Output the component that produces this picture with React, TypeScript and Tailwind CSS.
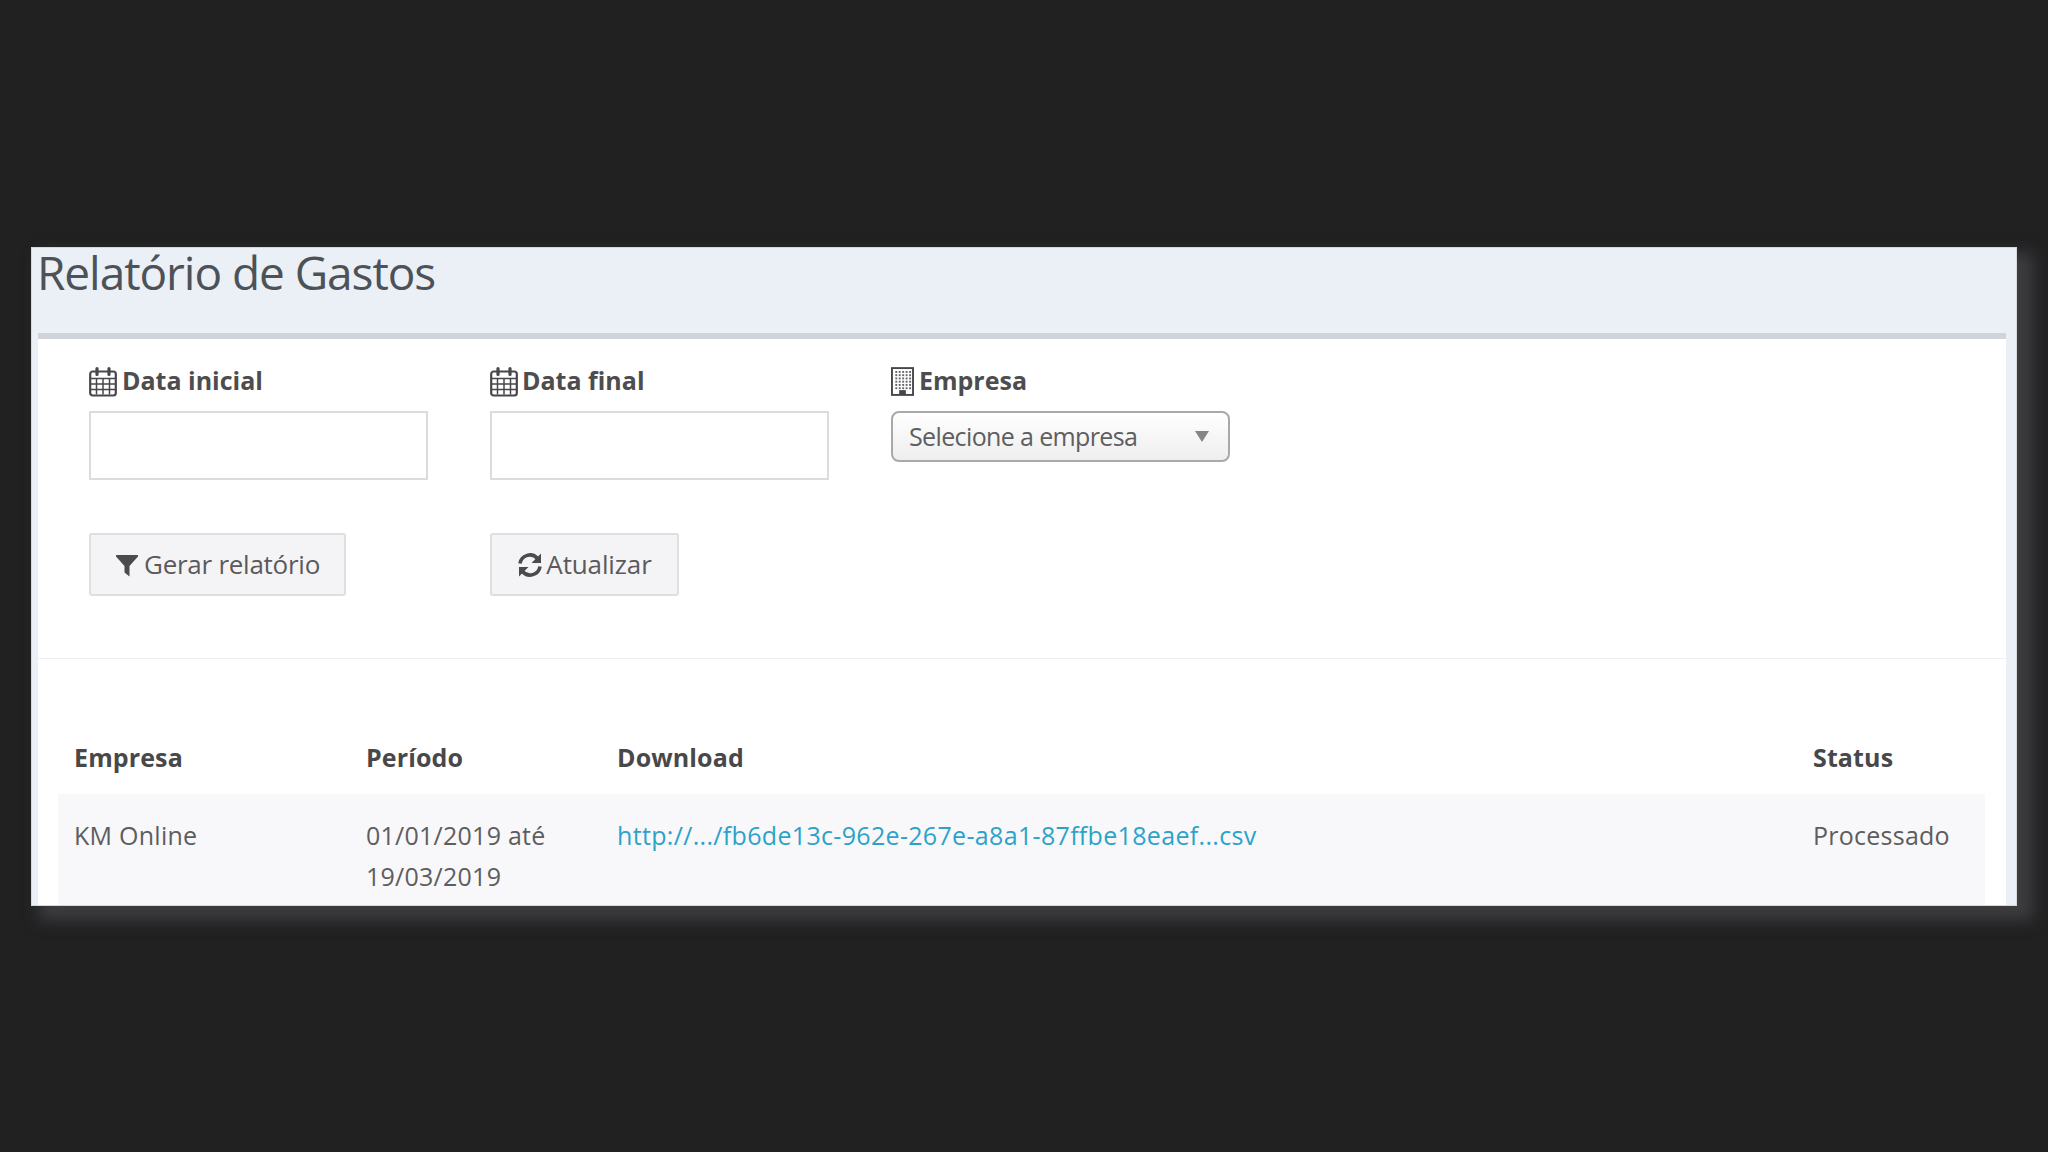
import React from "react";

const font = { fontFamily: '"Open Sans", "Noto Sans", sans-serif' };

function Calendar() {
  return (
    <svg viewBox="0 0 28 30" className="w-[28px] h-[31px] shrink-0" fill="none" stroke="#47474b" strokeWidth="2.2">
      <rect x="1.2" y="5" width="25.6" height="24" rx="2.5" />
      <path d="M1.2 12h25.6M7.5 12v16M14 12v16M20.5 12v16M1.2 17.5h25.6M1.2 23h25.6" strokeWidth="1.5" />
      <path d="M8 2v6M20 2v6" strokeWidth="3.2" strokeLinecap="round" />
    </svg>
  );
}

function Building() {
  const dots: React.ReactNode[] = [];
  for (let r = 0; r < 6; r++) {
    for (let c = 0; c < 5; c++) {
      dots.push(<rect key={`${r}-${c}`} x={4.5 + c * 3.6} y={4 + r * 3.4} width="2" height="2" fill="#66666a" />);
    }
  }
  return (
    <svg viewBox="0 0 24 30" className="w-[23px] h-[29px] shrink-0">
      <rect x="1" y="1" width="22" height="28" fill="#fff" stroke="#47474b" strokeWidth="2" />
      {dots}
      <rect x="8.5" y="24" width="7" height="5" fill="#47474b" />
    </svg>
  );
}

function Filter() {
  return (
    <svg viewBox="0 0 24 24" className="w-[24px] h-[24px] shrink-0" fill="#4a4a4f">
      <path d="M1 2h22v1.6L14.5 13v10.5L9.5 19.5V13L1 3.6z" />
    </svg>
  );
}

function Refresh() {
  return (
    <svg viewBox="0 0 26 26" className="w-[26px] h-[26px] shrink-0" fill="none" stroke="#4a4a4f" strokeWidth="3.6">
      <path d="M3 11.5A10 10 0 0 1 20.5 6.5" />
      <path d="M23 14.5A10 10 0 0 1 5.5 19.5" />
      <path d="M24 1.5V11h-9.5z" fill="#4a4a4f" stroke="none" />
      <path d="M2 24.5V15h9.5z" fill="#4a4a4f" stroke="none" />
    </svg>
  );
}

export default function App() {
  return (
    <div className="w-[2048px] h-[1152px] bg-[#212122] pt-[247px] pl-[31px] overflow-hidden" style={font}>
      <div className="w-[1986px] h-[659px] bg-[#ebeff6] border border-[#d8d8dc] shadow-[12px_10px_14px_4px_#3d3d40] text-[#555558]">
        <h1 className="h-[85px] pl-[5px] pt-[1px] text-[46px] leading-[46px] font-normal text-[#4d5258] tracking-[-0.023em]">Relatório de Gastos</h1>
        <div className="ml-[6px] mr-[10px] h-[572px] bg-white border-t-[6px] border-[#d0d3da]">
          <div className="h-[320px] border-b border-[#eeeff1] pl-[51px] pt-[26px]">
            <div className="flex gap-[62px] items-start">
              <div className="w-[339px]">
                <label className="flex items-center gap-[5px] h-[32px] text-[25px] font-bold text-[#4d4d50]"><Calendar />Data inicial</label>
                <div className="mt-[14px] h-[69px] border-2 border-[#dcdcdf] bg-white" />
              </div>
              <div className="w-[339px]">
                <label className="flex items-center gap-[4px] h-[32px] text-[25px] font-bold text-[#4d4d50]"><Calendar />Data final</label>
                <div className="mt-[14px] h-[69px] border-2 border-[#dcdcdf] bg-white" />
              </div>
              <div className="w-[339px]">
                <label className="flex items-center gap-[5px] h-[32px] text-[25px] font-bold text-[#4d4d50]"><Building />Empresa</label>
                <div className="mt-[14px] h-[51px] flex items-center justify-between pl-[16px] pr-[19px] border-2 border-[#a9a9ad] rounded-[8px] bg-gradient-to-b from-white to-[#eeeeee] text-[25px] tracking-[-0.025em] text-[#5e5e61]">
                  <span>Selecione a empresa</span>
                  <span className="w-0 h-0 border-x-[7px] border-x-transparent border-t-[11px] border-t-[#858587]" />
                </div>
              </div>
            </div>
            <div className="flex gap-[62px] mt-[53px]">
              <div className="w-[339px]">
                <button className="w-[257px] h-[63px] flex items-center justify-center gap-[5px] bg-[#f4f4f6] border-2 border-[#dfdfe2] rounded-[3px] text-[26px] tracking-[-0.01em] text-[#5a5a5d]"><Filter />Gerar relatório</button>
              </div>
              <div className="w-[339px]">
                <button className="w-[189px] h-[63px] flex items-center justify-center gap-[3px] bg-[#f4f4f6] border-2 border-[#dfdfe2] rounded-[3px] text-[26px] tracking-[-0.005em] text-[#5a5a5d]"><Refresh />Atualizar</button>
              </div>
            </div>
          </div>
          <div className="pl-[20px] pr-[21px] pt-[80px]">
            <div className="grid grid-cols-[292px_251px_1196px_1fr] pl-[16px] h-[55px] items-start text-[25px] tracking-[0.005em] font-bold text-[#48484b]">
              <div>Empresa</div>
              <div>Período</div>
              <div>Download</div>
              <div>Status</div>
            </div>
            <div className="grid grid-cols-[292px_251px_1196px_1fr] pl-[16px] pt-[21px] h-[111px] bg-[#f8f8fa] text-[25px] leading-[41px] tracking-[0.01em] text-[#5d5d60]">
              <div>KM Online</div>
              <div>01/01/2019 até<br />19/03/2019</div>
              <div><a className="text-[#2ba3c9] tracking-[0.013em]">http://.../fb6de13c-962e-267e-a8a1-87ffbe18eaef...csv</a></div>
              <div>Processado</div>
            </div>
          </div>
        </div>
      </div>
    </div>
  );
}
